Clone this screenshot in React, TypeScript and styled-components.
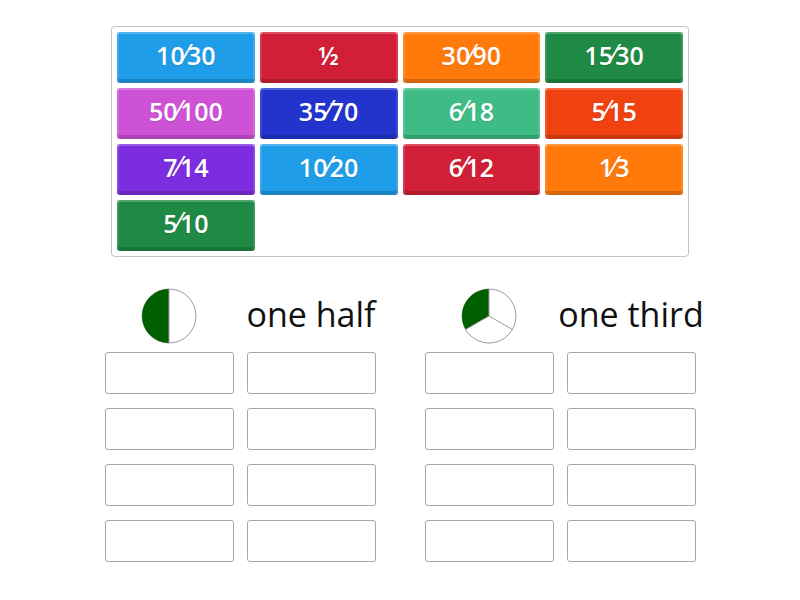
import React from 'react';
import styled, { createGlobalStyle } from 'styled-components';

const GlobalStyle = createGlobalStyle`
    body {
        margin: 0;
        background: #ffffff;
        font-family: "Open Sans", "Liberation Sans", sans-serif;
    }
`;

type Tile = { label: string; color: string };

const tiles: Tile[] = [
    { label: '10⁄30', color: '#1f9de8' },
    { label: '½', color: '#d21f38' },
    { label: '30⁄90', color: '#ff7a0b' },
    { label: '15⁄30', color: '#1f8a45' },
    { label: '50⁄100', color: '#cd52d6' },
    { label: '35⁄70', color: '#2234cc' },
    { label: '6⁄18', color: '#3fbc86' },
    { label: '5⁄15', color: '#f04111' },
    { label: '7⁄14', color: '#7c2de0' },
    { label: '10⁄20', color: '#1f9de8' },
    { label: '6⁄12', color: '#d21f38' },
    { label: '1⁄3', color: '#ff7a0b' },
    { label: '5⁄10', color: '#1f8a45' },
];

const groups = [
    { name: 'one half', kind: 'half' as const },
    { name: 'one third', kind: 'third' as const },
];

const PieIcon = ({ kind }: { kind: 'half' | 'third' }) => (
    <svg width="56" height="56" viewBox="0 0 56 56">
        <circle cx="28" cy="28" r="27" fill="#ffffff" stroke="#9a9a9a" strokeWidth="1" />
        {kind === 'half' ? (
            <>
                <path d="M28 1 A27 27 0 0 0 28 55 Z" fill="#006000" />
                <line x1="28" y1="1" x2="28" y2="55" stroke="#9a9a9a" strokeWidth="1" />
            </>
        ) : (
            <>
                <path d="M28 28 L4.62 41.5 A27 27 0 0 1 28 1 Z" fill="#006000" />
                <path d="M28 28 L28 1 M28 28 L51.38 41.5 M28 28 L4.62 41.5" stroke="#9a9a9a" strokeWidth="1" fill="none" />
            </>
        )}
    </svg>
);

// split on the fraction slash so the font does not build a stacked fraction
const FractionLabel = ({ label }: { label: string }) => {
    const parts = label.split('⁄');
    if (parts.length < 2) return <>{label}</>;
    return (
        <>
            <span>{parts[0]}</span>
            <Slash>⁄</Slash>
            <span>{parts[1]}</span>
        </>
    );
};

const App = () => {
    return (
        <Page>
            <GlobalStyle />
            <Board>
                {tiles.map((t, i) => (
                    <TileButton key={i} color={t.color}>
                        <FractionLabel label={t.label} />
                    </TileButton>
                ))}
            </Board>
            <Groups>
                {groups.map((g) => (
                    <Group key={g.name}>
                        <Header>
                            <PieIcon kind={g.kind} />
                            <Title>{g.name}</Title>
                        </Header>
                        {[...Array(8)].map((_, i) => (
                            <Slot key={i} />
                        ))}
                    </Group>
                ))}
            </Groups>
        </Page>
    );
};

export default App;

const Page = styled.div`
    width: 800px;
    height: 600px;
    padding-top: 26px;
    box-sizing: border-box;
    overflow: hidden;
`;

const Board = styled.div`
    width: 578px;
    margin: 0 auto;
    box-sizing: border-box;
    border: 1px solid #c4c4c4;
    border-radius: 4px;
    padding: 5px;
    display: grid;
    grid-template-columns: repeat(4, 1fr);
    grid-auto-rows: 51px;
    gap: 5px 5px;
`;

const TileButton = styled.div<{ color: string }>`
    background-color: ${({ color }) => color};
    border-radius: 3px;
    box-shadow:
        inset 0 2px 0 rgba(255, 255, 255, 0.22),
        inset 2px 0 0 rgba(255, 255, 255, 0.12),
        inset -2px 0 0 rgba(255, 255, 255, 0.12),
        inset 0 -4px 0 rgba(0, 0, 0, 0.16);
    color: #ffffff;
    font-family: "Open Sans", "Liberation Sans", sans-serif;
    font-weight: 600;
    font-size: 25px;
    font-feature-settings: "frac" 0, "numr" 0, "dnom" 0;
    display: flex;
    align-items: center;
    justify-content: center;
    padding-bottom: 6px;
    box-sizing: border-box;
    text-shadow: 0 1px 1px rgba(0, 0, 0, 0.12);
`;

const Slash = styled.span`
    display: inline-block;
    font-family: "DejaVu Sans", sans-serif;
    font-weight: 400;
    font-size: 26px;
    margin: 0 -1px;
`;

const Groups = styled.div`
    display: flex;
    justify-content: center;
    gap: 49px;
    margin-top: 31px;
`;

const Group = styled.div`
    display: grid;
    grid-template-columns: 129px 129px;
    column-gap: 13px;
    row-gap: 14px;
`;

const Header = styled.div`
    grid-column: 1 / span 2;
    display: grid;
    grid-template-columns: 129px 129px;
    column-gap: 13px;
    height: 56px;
    margin-bottom: -6px;
    align-items: center;
    justify-items: center;
`;

const Title = styled.div`
    font-family: "Open Sans", "Liberation Sans", sans-serif;
    font-size: 34px;
    color: #111111;
    white-space: nowrap;
    line-height: 1;
    padding-bottom: 5px;
`;

const Slot = styled.div`
    height: 42px;
    box-sizing: border-box;
    border: 1px solid #a8a8a8;
    border-radius: 3px;
    background: #ffffff;
`;
